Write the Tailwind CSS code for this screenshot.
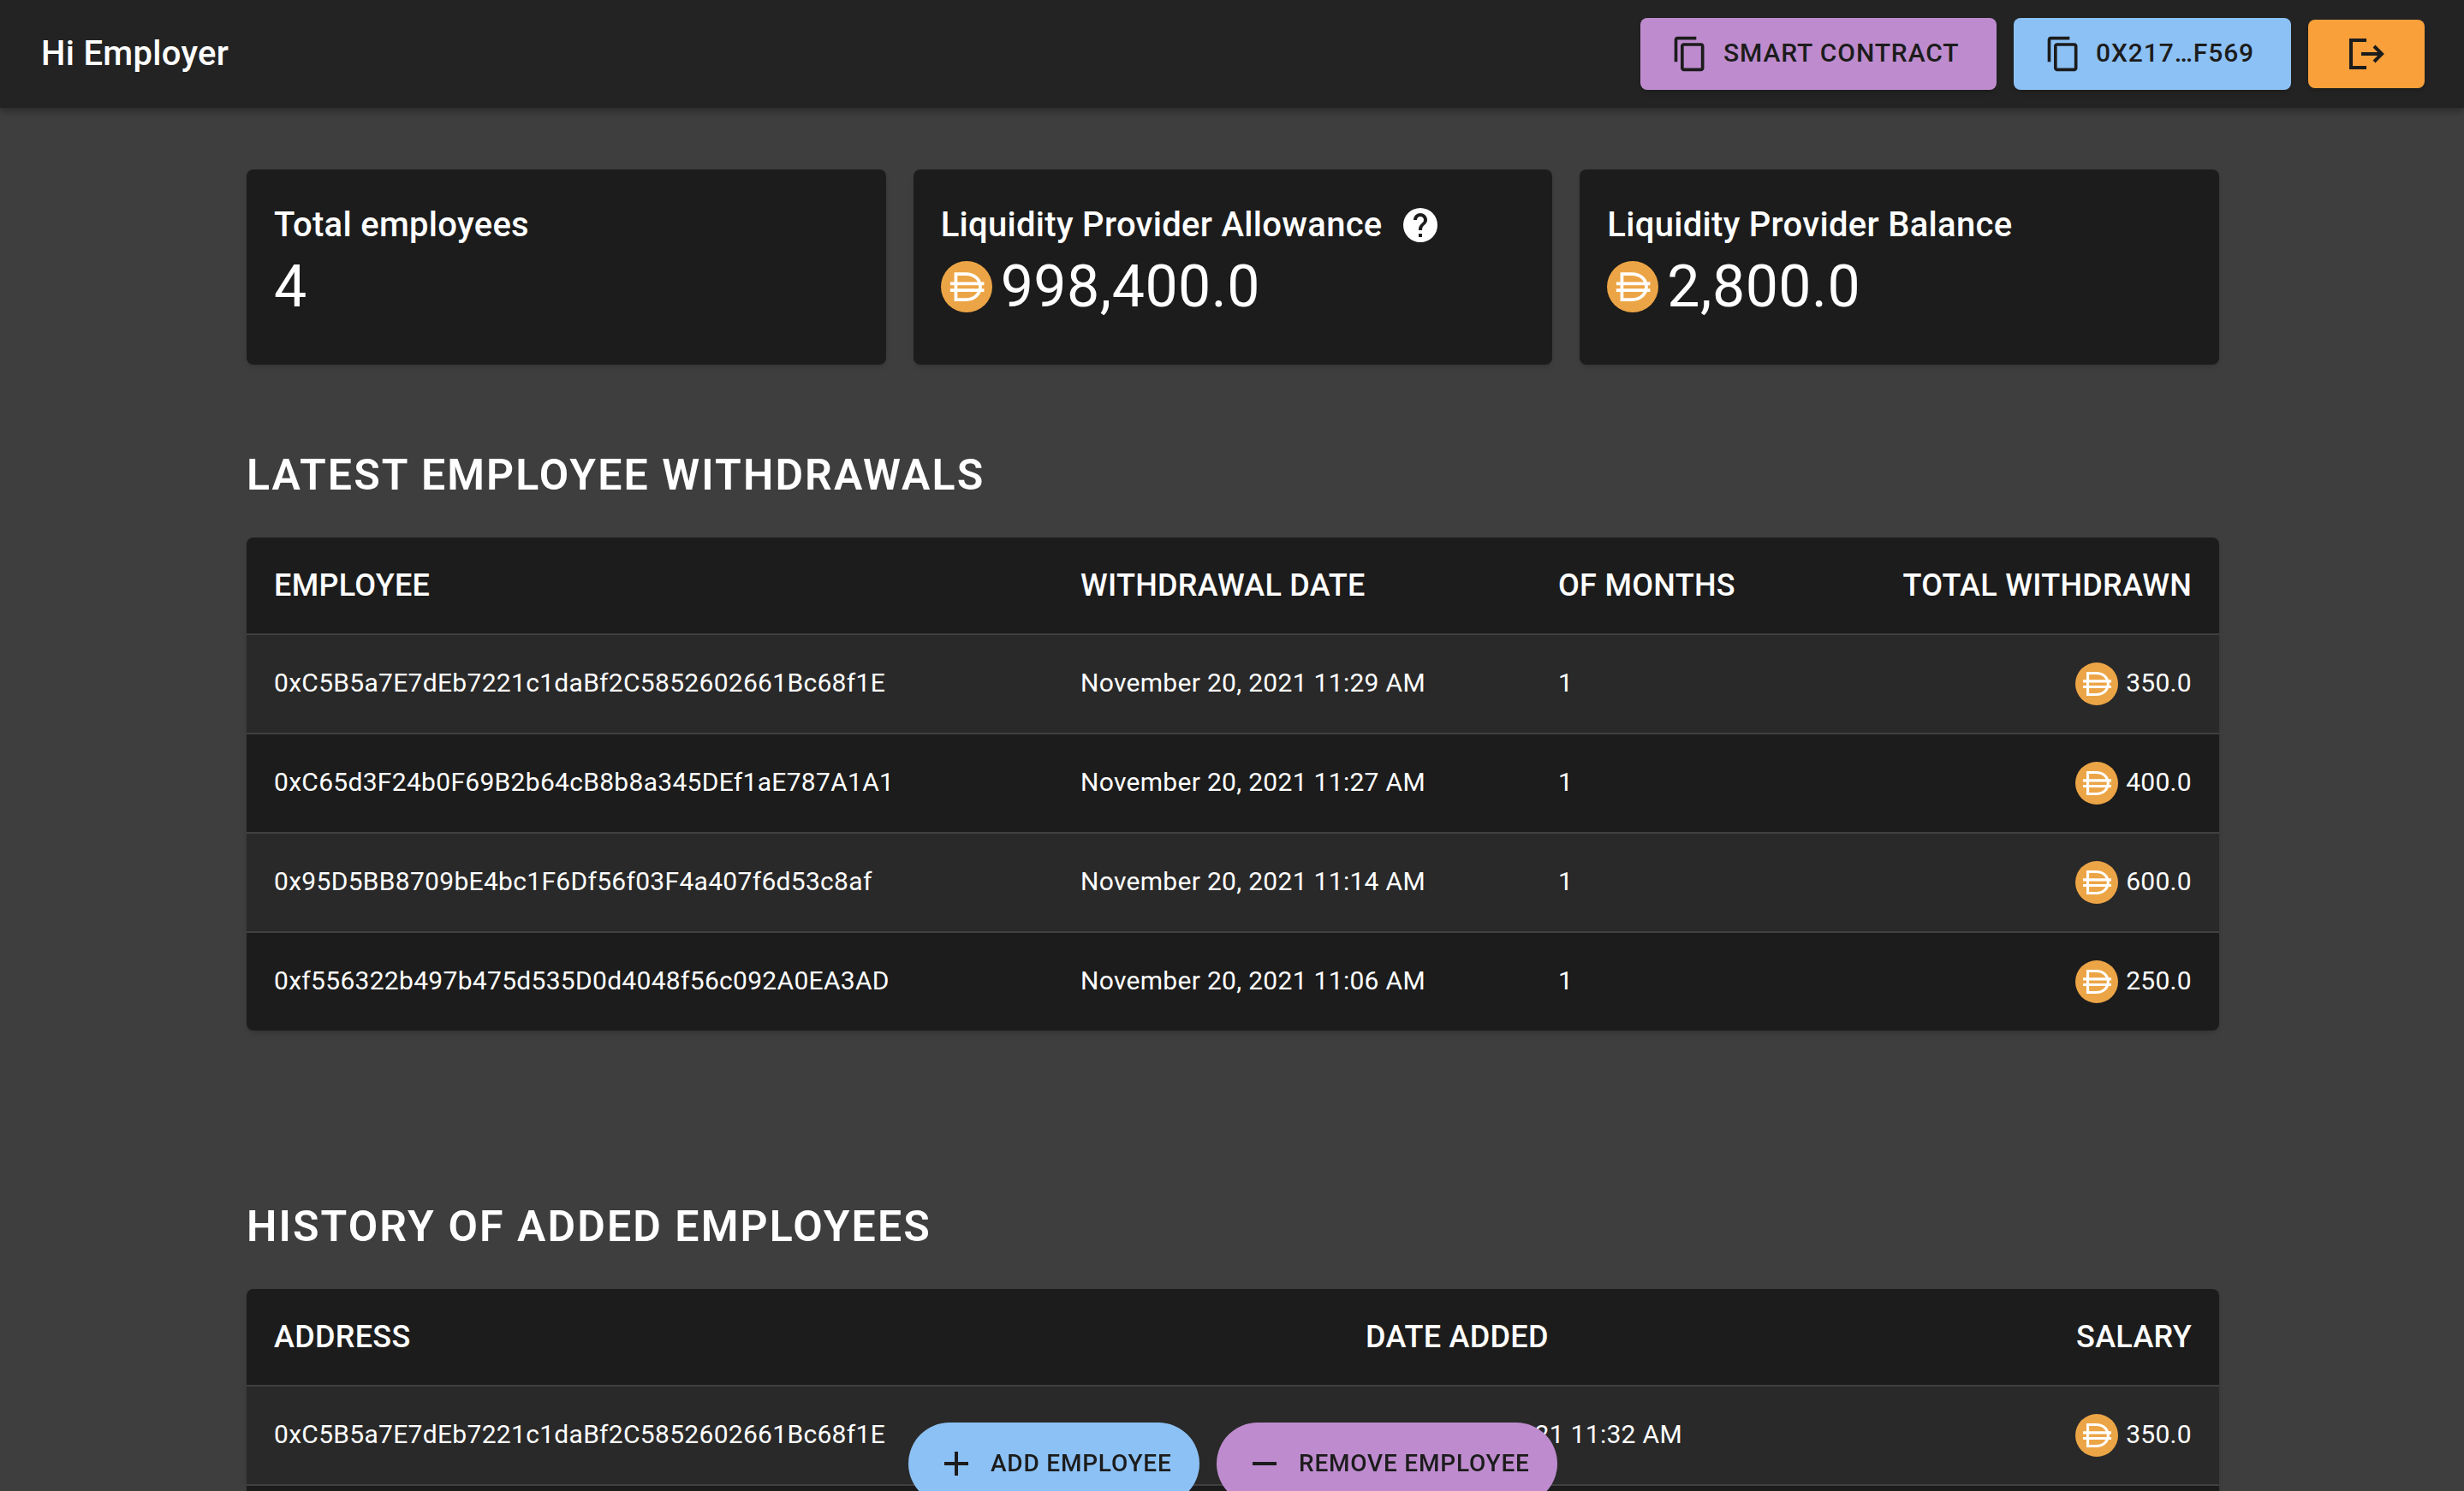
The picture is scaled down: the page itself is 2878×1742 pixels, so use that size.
<!DOCTYPE html>
<html lang="en">
<head>
    <meta charset="UTF-8">
    <title>Employer dashboard</title>
    <script src="https://cdn.jsdelivr.net/npm/@tailwindcss/browser@4"></script>
</head>
<body class="h-[1742px] overflow-hidden bg-[#3e3e3e] font-['Roboto',sans-serif] text-white">
    <svg class="hidden">
        <symbol id="dai" viewBox="0 0 32 32">
            <circle cx="16" cy="16" r="16" fill="#eca546"/>
            <path d="M9.300 8h6.200c5.500 0 9 3.600 9 8s-3.500 8-9 8H9.300z" fill="none" stroke="#fff" stroke-width="2"/>
            <path d="M5.800 14h21.100M5.800 18.200h21.100" fill="none" stroke="#fff" stroke-width="2"/>
        </symbol>
        <symbol id="copy" viewBox="0 0 24 24">
            <path d="M16 1H4c-1.100 0-2 .9-2 2v14h2V3h12V1zm3 4H8c-1.100 0-2 .9-2 2v14c0 1.100.9 2 2 2h11c1.100 0 2-.9 2-2V7c0-1.100-.9-2-2-2zm0 16H8V7h11v14z" fill="currentColor"/>
        </symbol>
    </svg>

    <header class="flex h-[126px] items-center justify-between bg-[#232323] pl-[48px] pr-[46px] shadow-[0_4px_8px_rgba(0,0,0,0.3)]">
        <h1 class="text-[40px] font-medium tracking-[0.3px]">Hi Employer</h1>
        <div class="flex items-center gap-[20px] text-[#1c1c1c]">
            <button class="flex h-[84px] w-[416px] items-center rounded-[8px] bg-[#be8cce] pb-[3px] pl-[36px] text-[30px] font-medium tracking-[0.9px] shadow-md">
                <svg class="mt-[3px] mr-[17px] h-[44px] w-[44px]"><use href="#copy"/></svg>SMART CONTRACT
            </button>
            <button class="flex h-[84px] w-[324px] items-center rounded-[8px] bg-[#8cc1f5] pb-[3px] pl-[36px] text-[30px] font-medium tracking-[0.9px] shadow-md">
                <svg class="mt-[3px] mr-[16px] h-[44px] w-[44px]"><use href="#copy"/></svg>0X217…F569
            </button>
            <button class="flex h-[80px] w-[136px] items-center justify-center rounded-[8px] bg-[#f9a03a] shadow-md">
                <svg class="h-[48px] w-[48px]" viewBox="0 0 48 48" fill="none" stroke="currentColor" stroke-width="4"><path d="M24 8H6v32h18M18 24h24M33 15l9 9-9 9"/></svg>
            </button>
        </div>
    </header>

    <main class="ml-[288px] w-[2304px] pt-[72px]">
        <section class="grid grid-cols-3 gap-[32px]">
            <div class="h-[228px] rounded-[8px] bg-[#1c1c1c] px-[32px] pt-[41px] shadow-md">
                <div class="text-[40px] leading-[48px] font-medium tracking-[0.3px]">Total employees</div>
                <div class="mt-[8px] text-[68px] leading-[80px] tracking-[0.5px]">4</div>
            </div>
            <div class="h-[228px] rounded-[8px] bg-[#1c1c1c] px-[32px] pt-[41px] shadow-md">
                <div class="flex items-center text-[40px] leading-[48px] font-medium tracking-[0.3px]">Liquidity Provider Allowance
                    <svg class="ml-[24px] h-[40px] w-[40px]" viewBox="0 0 20 20"><path fill-rule="evenodd" fill="#fff" d="M10 0a10 10 0 1 0 0 20 10 10 0 0 0 0-20zm1 17H9v-2h2v2zm2.070-7.750-.9.920C11.450 10.900 11 11.500 11 13H9v-.5c0-1.100.45-2.100 1.170-2.830l1.240-1.260c.37-.36.590-.86.590-1.410 0-1.100-.9-2-2-2s-2 .9-2 2H6c0-2.210 1.790-4 4-4s4 1.790 4 4c0 .88-.36 1.680-.93 2.250z"/></svg>
                </div>
                <div class="mt-[8px] flex items-center text-[68px] leading-[80px] tracking-[0.5px]">
                    <svg class="mr-[10px] h-[60px] w-[60px]"><use href="#dai"/></svg>998,400.0
                </div>
            </div>
            <div class="h-[228px] rounded-[8px] bg-[#1c1c1c] px-[32px] pt-[41px] shadow-md">
                <div class="text-[40px] leading-[48px] font-medium tracking-[0.3px]">Liquidity Provider Balance</div>
                <div class="mt-[8px] flex items-center text-[68px] leading-[80px] tracking-[0.5px]">
                    <svg class="mr-[10px] h-[60px] w-[60px]"><use href="#dai"/></svg>2,800.0
                </div>
            </div>
        </section>

        <h2 class="mt-[101px] text-[50px] leading-[56px] font-semibold tracking-[2.1px]">LATEST EMPLOYEE WITHDRAWALS</h2>
        <div class="mt-[45px] overflow-hidden rounded-[8px] bg-[#1c1c1c] shadow-md">
            <div class="grid h-[114px] grid-cols-[942px_558px_1fr_auto] items-center border-b-2 border-[#404040] px-[32px] text-[36px] font-medium tracking-[0.3px]">
                <div>EMPLOYEE</div><div>WITHDRAWAL DATE</div><div>OF MONTHS</div><div>TOTAL WITHDRAWN</div>
            </div>
            <div class="grid h-[116px] grid-cols-[942px_558px_1fr_auto] items-center border-b-2 border-[#404040] bg-[#292929] px-[32px] pb-[4px] text-[30px] tracking-[0.3px]">
                <div>0xC5B5a7E7dEb7221c1daBf2C5852602661Bc68f1E</div><div>November 20, 2021 11:29 AM</div><div>1</div>
                <div class="flex items-center gap-[9px]"><svg class="mt-[4px] h-[50px] w-[50px]"><use href="#dai"/></svg>350.0</div>
            </div>
            <div class="grid h-[116px] grid-cols-[942px_558px_1fr_auto] items-center border-b-2 border-[#404040] px-[32px] pb-[4px] text-[30px] tracking-[0.3px]">
                <div>0xC65d3F24b0F69B2b64cB8b8a345DEf1aE787A1A1</div><div>November 20, 2021 11:27 AM</div><div>1</div>
                <div class="flex items-center gap-[9px]"><svg class="mt-[4px] h-[50px] w-[50px]"><use href="#dai"/></svg>400.0</div>
            </div>
            <div class="grid h-[116px] grid-cols-[942px_558px_1fr_auto] items-center border-b-2 border-[#404040] bg-[#292929] px-[32px] pb-[4px] text-[30px] tracking-[0.3px]">
                <div>0x95D5BB8709bE4bc1F6Df56f03F4a407f6d53c8af</div><div>November 20, 2021 11:14 AM</div><div>1</div>
                <div class="flex items-center gap-[9px]"><svg class="mt-[4px] h-[50px] w-[50px]"><use href="#dai"/></svg>600.0</div>
            </div>
            <div class="grid h-[114px] grid-cols-[942px_558px_1fr_auto] items-center px-[32px] pb-[4px] text-[30px] tracking-[0.3px]">
                <div>0xf556322b497b475d535D0d4048f56c092A0EA3AD</div><div>November 20, 2021 11:06 AM</div><div>1</div>
                <div class="flex items-center gap-[9px]"><svg class="mt-[4px] h-[50px] w-[50px]"><use href="#dai"/></svg>250.0</div>
            </div>
        </div>

        <h2 class="mt-[201px] text-[50px] leading-[56px] font-semibold tracking-[2.1px]">HISTORY OF ADDED EMPLOYEES</h2>
        <div class="mt-[45px] h-[400px] overflow-hidden rounded-[8px] bg-[#1c1c1c] shadow-md">
            <div class="grid h-[114px] grid-cols-[1275px_1fr_auto] items-center border-b-2 border-[#404040] px-[32px] text-[36px] font-medium tracking-[0.3px]">
                <div>ADDRESS</div><div>DATE ADDED</div><div>SALARY</div>
            </div>
            <div class="grid h-[116px] grid-cols-[1242px_1fr_auto] items-center border-b-2 border-[#404040] bg-[#292929] px-[32px] pb-[4px] text-[30px] tracking-[0.3px]">
                <div>0xC5B5a7E7dEb7221c1daBf2C5852602661Bc68f1E</div><div>November 20, 2021 11:32 AM</div>
                <div class="flex items-center gap-[9px]"><svg class="mt-[4px] h-[50px] w-[50px]"><use href="#dai"/></svg>350.0</div>
            </div>
        </div>
    </main>

    <div class="fixed top-[1662px] left-[1061px] flex gap-[20px] text-[#1c1c1c]">
        <button class="flex h-[96px] w-[340px] items-center rounded-[48px] bg-[#8cc1f5] pl-[32px] text-[28px] font-medium tracking-[0.8px]">
            <svg class="mr-[16px] h-[48px] w-[48px]" viewBox="0 0 24 24"><path fill="currentColor" d="M19 13h-6v6h-2v-6H5v-2h6V5h2v6h6v2z"/></svg>ADD EMPLOYEE
        </button>
        <button class="flex h-[96px] w-[398px] items-center rounded-[48px] bg-[#be8cce] pl-[32px] text-[28px] font-medium tracking-[0.8px]">
            <svg class="mr-[16px] h-[48px] w-[48px]" viewBox="0 0 24 24"><path fill="currentColor" d="M19 13H5v-2h14v2z"/></svg>REMOVE EMPLOYEE
        </button>
    </div>
</body>
</html>
